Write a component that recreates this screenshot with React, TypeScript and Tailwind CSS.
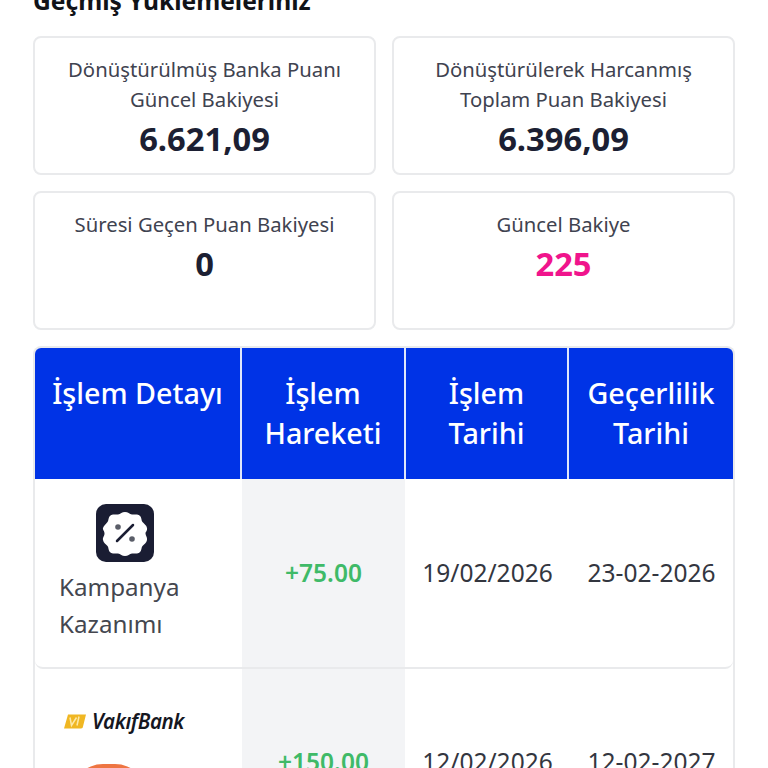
import React from 'react';

const font = "font-['Noto_Sans',sans-serif]";

const StatCard = ({ lines, value, pink }: { lines: string[]; value: string; pink?: boolean }) => (
  <div className="h-[139px] rounded-[8px] border-2 border-[#e9eaec] bg-white px-2 pt-[16px] text-center">
    {lines.map((line) => (
      <p key={line} className="text-[20.3px] leading-[30px] text-[#3f4350]">
        {line}
      </p>
    ))}
    <p className={`text-[32.700px] font-bold leading-[49px] ${pink ? 'text-[#f0148c]' : 'text-[#1c1f33]'}`}>{value}</p>
  </div>
);

const HeaderCell = ({ children }: { children: React.ReactNode }) => (
  <div className="px-1 pt-[25px] text-center text-[28.700px] font-medium leading-[40px] text-white">{children}</div>
);

const BadgeIcon = () => (
  <svg viewBox="0 0 58 58" className="h-[58px] w-[58px]">
    <rect width="58" height="58" rx="10" fill="#1a1d33" />
    <path
      d="M29 8c3 0 4.500 2 7 2.500s5-1 7.500 1 1.500 4.500 3 6.500 4 3 4.500 6-1.500 3.500-1.500 5.500 2 3.500 1.500 6.500-3 4-4.500 6-.5 4.500-3 6.500-5 .5-7.500 1-4 2.500-7 2.500-4.500-2-7-2.500-5 1-7.500-1-1.500-4.500-3-6.500-4-3-4.500-6 1.500-3.500 1.500-6.500-2-3.500-1.500-5.500 3-4 4.500-6 .5-4.500 3-6.500 5-.5 7.500-1 4-2.500 7-2.500z"
      fill="#ffffff"
    />
    <path d="M21 37 37 21" stroke="#1a1d33" strokeWidth="2.500" strokeLinecap="round" />
    <circle cx="22" cy="23" r="2.800" fill="#5a5d68" />
    <circle cx="36" cy="35" r="2.800" fill="#5a5d68" />
  </svg>
);

const VakifLogo = () => (
  <div className="flex items-center gap-[6px]">
    <svg viewBox="0 0 22 14" className="h-[15px] w-[22px]">
      <path d="M4 0h18l-3 12a2 2 0 0 1-2 2H0z" fill="#f0b723" />
      <path d="M6 3l1.500 8 5-8M15 2l-2 9" stroke="#fde9a8" strokeWidth="1.500" fill="none" />
    </svg>
    <span className="text-[20.600px] font-semibold italic leading-none tracking-[-0.4px] text-[#15171f]">VakıfBank</span>
  </div>
);

export default function App() {
  return (
    <div className={`h-[768px] w-[768px] overflow-hidden bg-white ${font}`}>
      <div className="flex flex-col px-[33px]">
        <h2 className="mt-[-17px] text-[24.600px] font-bold leading-[35px] text-[#111318]">Geçmiş Yüklemeleriniz</h2>

        <div className="mt-[18px] grid grid-cols-2 gap-x-[16px] gap-y-[16px]">
          <StatCard lines={['Dönüştürülmüş Banka Puanı', 'Güncel Bakiyesi']} value="6.621,09" />
          <StatCard lines={['Dönüştürülerek Harcanmış', 'Toplam Puan Bakiyesi']} value="6.396,09" />
          <StatCard lines={['Süresi Geçen Puan Bakiyesi']} value="0" />
          <StatCard lines={['Güncel Bakiye']} value="225" pink />
        </div>

        <div className="mt-[16px] overflow-hidden rounded-t-[8px] border-x-2 border-t-2 border-[#e9eaec]">
          <div className="grid h-[131px] grid-cols-[205px_2px_162px_2px_161px_2px_164px] bg-[#0033e6]">
            <HeaderCell>İşlem Detayı</HeaderCell>
            <div className="bg-[#dfe6fb]" />
            <HeaderCell>
              İşlem
              <br />
              Hareketi
            </HeaderCell>
            <div className="bg-[#dfe6fb]" />
            <HeaderCell>
              İşlem
              <br />
              Tarihi
            </HeaderCell>
            <div className="bg-[#dfe6fb]" />
            <HeaderCell>
              Geçerlilik
              <br />
              Tarihi
            </HeaderCell>
          </div>

          <div className="grid h-[190px] grid-cols-[207px_163px_163px_165px] rounded-b-[8px] border-b-2 border-[#e9eaec] text-[24.500px] text-[#33363f]">
            <div className="flex flex-col pl-[24px] pt-[25px]">
              <div className="ml-[37px]">
                <BadgeIcon />
              </div>
              <p className="mt-[6px] text-[24.200px] leading-[37px] text-[#44474f]">
                Kampanya
                <br />
                Kazanımı
              </p>
            </div>
            <div className="flex items-center justify-center bg-[#f3f4f6] font-semibold text-[#3fba68]">+75.00</div>
            <div className="flex items-center justify-center pl-[2px]">19/02/2026</div>
            <div className="flex items-center justify-center pl-[2px]">23-02-2026</div>
          </div>

          <div className="grid h-[100px] grid-cols-[207px_163px_163px_165px] text-[24.500px] text-[#33363f]">
            <div className="relative overflow-hidden pl-[29px] pt-[42px]">
              <VakifLogo />
              <div className="absolute left-[36px] top-[95px] h-[64px] w-[76px] rounded-full bg-[#ee7542]" />
            </div>
            <div className="bg-[#f3f4f6] pt-[75px] text-center font-semibold text-[#3fba68]">+150.00</div>
            <div className="pl-[2px] pt-[75px] text-center">12/02/2026</div>
            <div className="pl-[2px] pt-[75px] text-center">12-02-2027</div>
          </div>
        </div>
      </div>
    </div>
  );
}
